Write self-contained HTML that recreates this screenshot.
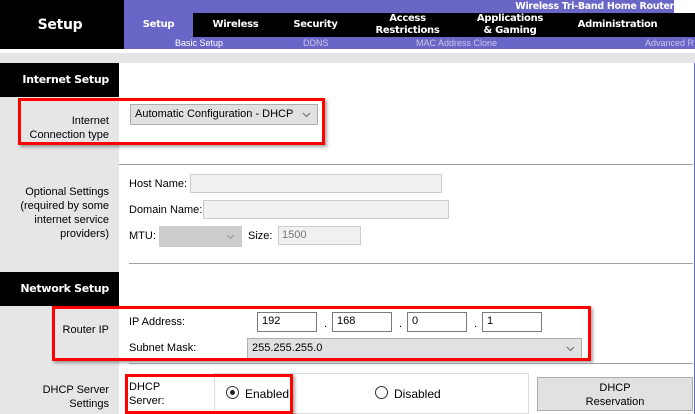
<!DOCTYPE html>
<html><head><style>
*{margin:0;padding:0;box-sizing:border-box}
body{width:695px;height:414px;overflow:hidden;background:#fff;font-family:"Liberation Sans",Arial,sans-serif;font-size:11px;color:#000;position:relative}
.a{position:absolute}
.b{font-family:"DejaVu Sans",sans-serif;font-weight:bold;color:#fff;letter-spacing:-0.3px}
.lbl{text-align:right;line-height:14px}
.inp{position:absolute;border:1px solid #ccc;background:#f0f0f0;height:19px}
.ip{position:absolute;border:1px solid #7a7a7a;background:#fff;height:20px;padding:2px 4px;font-size:11px}
.red{position:absolute;border:3px solid #f00;box-shadow:2px 2px 3px rgba(0,0,0,.35)}
.sel{position:absolute;border:1px solid #adadad;background:#e1e1e1;height:21px;padding:3px 4px;font-size:11px}
.chev{position:absolute;right:6px;top:7px}
</style></head><body>
<div class="a" style="left:0;top:0;width:124px;height:49px;background:#000"></div>
<div class="a b" style="left:0;top:17px;width:120px;text-align:center;font-size:14px">Setup</div>
<div class="a" style="left:124px;top:0;width:571px;height:49px;background:#6a66c8"></div>
<div class="a" style="left:674px;top:0;width:21px;height:13px;background:#fff"></div>
<div class="a b" style="left:450px;top:1px;width:224px;text-align:right;font-size:9.5px;line-height:12px">Wireless Tri-Band Home Router</div>
<div class="a" style="left:193px;top:13px;width:502px;height:24px;background:#000"></div>
<div class="a b" style="left:124px;top:19px;width:69px;text-align:center;font-size:10px">Setup</div>
<div class="a b" style="left:193px;top:19px;width:85px;text-align:center;font-size:10px">Wireless</div>
<div class="a b" style="left:278px;top:19px;width:75px;text-align:center;font-size:10px">Security</div>
<div class="a b" style="left:365px;top:13px;width:85px;text-align:center;font-size:10px;line-height:12px">Access<br>Restrictions</div>
<div class="a b" style="left:465px;top:13px;width:90px;text-align:center;font-size:10px;line-height:12px">Applications<br>&amp; Gaming</div>
<div class="a b" style="left:565px;top:19px;width:105px;text-align:center;font-size:10px">Administration</div>
<div class="a" style="left:175px;top:38px;font-size:9px;color:#fff">Basic Setup</div>
<div class="a" style="left:303px;top:38px;font-size:9px;color:#c8c8e8">DDNS</div>
<div class="a" style="left:416px;top:38px;font-size:9px;color:#c8c8e8">MAC Address Clone</div>
<div class="a" style="left:645px;top:38px;font-size:9px;color:#c8c8e8;white-space:nowrap">Advanced R</div>
<div class="a" style="left:0;top:53px;width:695px;height:10px;background:#e5e5e5"></div>
<div class="a" style="left:0;top:63px;width:119px;height:351px;background:#e6e6e6"></div>
<div class="a" style="left:694px;top:63px;width:1px;height:351px;background:#6a66c8"></div>
<div class="a" style="left:0;top:63px;width:119px;height:34px;background:#000"></div>
<div class="a b" style="left:0;top:73px;width:109px;text-align:right;font-size:11px">Internet Setup</div>
<div class="a" style="left:0;top:272px;width:119px;height:34px;background:#000"></div>
<div class="a b" style="left:0;top:282px;width:109px;text-align:right;font-size:11px">Network Setup</div>
<div class="a lbl" style="left:0;top:114px;width:109px">Internet<br>Connection type</div>
<div class="sel" style="left:130px;top:104px;width:188px">Automatic Configuration - DHCP<svg class="chev" width="9" height="6"><path d="M1 1L4.5 4.5L8 1" stroke="#666" fill="none"/></svg></div>
<div class="red" style="left:18px;top:98px;width:307px;height:47px"></div>
<div class="a" style="left:119px;top:164px;width:574px;height:1px;background:#a0a0a0"></div>
<div class="a lbl" style="left:0;top:185px;width:109px">Optional Settings<br>(required by some<br>internet service<br>providers)</div>
<div class="a" style="left:129px;top:178px">Host Name:</div>
<div class="inp" style="left:190px;top:174px;width:252px"></div>
<div class="a" style="left:129px;top:204px">Domain Name:</div>
<div class="inp" style="left:203px;top:200px;width:246px"></div>
<div class="a" style="left:129px;top:230px">MTU:</div>
<div class="sel" style="left:159px;top:226px;width:83px;background:#ccc;border-color:#ccc"><svg class="chev" width="9" height="6"><path d="M1 1L4.5 4.5L8 1" stroke="#999" fill="none"/></svg></div>
<div class="a" style="left:248px;top:230px">Size:</div>
<div class="inp" style="left:278px;top:226px;width:83px;padding:2px 3px;color:#777">1500</div>
<div class="a" style="left:129px;top:263px;width:564px;height:1px;background:#a0a0a0"></div>
<div class="a lbl" style="left:0;top:323px;width:109px">Router IP</div>
<div class="a" style="left:129px;top:316px">IP Address:</div>
<div class="ip" style="left:257px;top:312px;width:60px">192</div>
<div class="a" style="left:324px;top:318px">.</div>
<div class="ip" style="left:332px;top:312px;width:60px">168</div>
<div class="a" style="left:399px;top:318px">.</div>
<div class="ip" style="left:407px;top:312px;width:60px">0</div>
<div class="a" style="left:474px;top:318px">.</div>
<div class="ip" style="left:482px;top:312px;width:60px">1</div>
<div class="a" style="left:129px;top:342px">Subnet Mask:</div>
<div class="sel" style="left:247px;top:338px;width:335px">255.255.255.0<svg class="chev" width="9" height="6"><path d="M1 1L4.5 4.5L8 1" stroke="#666" fill="none"/></svg></div>
<div class="red" style="left:52px;top:306px;width:539px;height:55px"></div>
<div class="a" style="left:129px;top:363px;width:564px;height:1px;background:#a0a0a0"></div>
<div class="a lbl" style="left:0;top:383px;width:109px">DHCP Server<br>Settings</div>
<div class="a" style="left:214px;top:373px;width:315px;height:41px;border:1px solid #ddd"></div>
<div class="a" style="left:129px;top:380px;line-height:14px">DHCP<br>Server:</div>
<div class="a" style="left:226px;top:386px;width:13px;height:13px;border:1px solid #333;border-radius:50%;background:#fff"></div>
<div class="a" style="left:230px;top:390px;width:5px;height:5px;border-radius:50%;background:#222"></div>
<div class="a" style="left:245px;top:387px;font-size:12px">Enabled</div>
<div class="red" style="left:125px;top:374px;width:168px;height:40px"></div>
<div class="a" style="left:375px;top:386px;width:13px;height:13px;border:1px solid #333;border-radius:50%;background:#fff"></div>
<div class="a" style="left:394px;top:387px;font-size:12px">Disabled</div>
<div class="a" style="left:537px;top:377px;width:156px;height:34px;border:1px solid #adadad;background:#e1e1e1;text-align:center;line-height:14px;padding-top:3px">DHCP<br>Reservation</div>
</body></html>
